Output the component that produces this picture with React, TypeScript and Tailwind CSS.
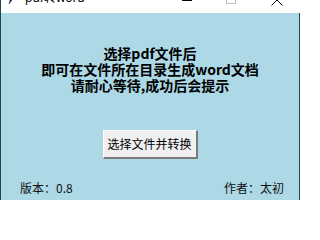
import React from "react";

export default function App() {
  const cjk = { fontFamily: '"Noto Sans CJK SC", "Noto Sans", sans-serif' };
  return (
    <div className="w-[300px] h-[200px] flex overflow-hidden bg-[#add8e6]" style={cjk}>
      <div className="w-px h-full bg-[#1c4a4a] shrink-0" />
      <div className="flex-1 flex flex-col min-w-0">
        <div className="h-[13px] bg-white relative overflow-hidden shrink-0">
          <svg className="absolute left-[7px] top-[-8px]" width="9" height="13" viewBox="0 0 9 13">
            <path d="M7 0 L2 10" stroke="#1b3c6e" strokeWidth="2" />
            <path d="M2 10 L1 12" stroke="#333" strokeWidth="1" />
          </svg>
          <div
            className="absolute left-[24px] top-[-10px] text-[12px] leading-[16px] text-black whitespace-nowrap"
            style={{ fontFamily: '"Noto Sans", "Noto Sans CJK SC", sans-serif' }}
          >
            pdf转word
          </div>
          <div className="absolute left-[181px] top-0 w-[10px] h-px bg-black" />
          <div className="absolute left-[225px] top-[-6px] w-[10px] h-[10px] border border-[#bdbdbd]" />
          <svg className="absolute left-[270px] top-[-6px]" width="12" height="12" viewBox="0 0 12 12">
            <path d="M0.5 0.5 L11.5 11.5 M11.5 0.5 L0.5 11.5" stroke="#000" strokeWidth="1" />
          </svg>
        </div>
        <div className="flex-1 flex min-h-0">
          <div className="flex-1 flex flex-col items-center pt-[32px]">
            <div className="flex flex-col items-center text-[14px] leading-[16px] font-bold text-black">
              <div>选择pdf文件后</div>
              <div>即可在文件所在目录生成word文档</div>
              <div>请耐心等待,成功后会提示</div>
            </div>
            <div className="mt-[37px] flex">
              <button className="w-[95px] h-[29px] bg-[#f0f0f0] text-[12px] text-black border-t border-l border-t-white border-l-white border-r-[2px] border-b-[2px] border-r-[#7a7a7a] border-b-[#7a7a7a] flex items-center justify-center">
                选择文件并转换
              </button>
            </div>
            <div className="mt-auto mb-[4px] w-full flex justify-between pl-[19px] pr-[15px] text-[12px] leading-[16px] text-[#111]">
              <span>版本：0.8</span>
              <span>作者：太初</span>
            </div>
          </div>
          <div className="w-px h-full bg-[#1c4a4a] shrink-0" />
        </div>
      </div>
    </div>
  );
}
